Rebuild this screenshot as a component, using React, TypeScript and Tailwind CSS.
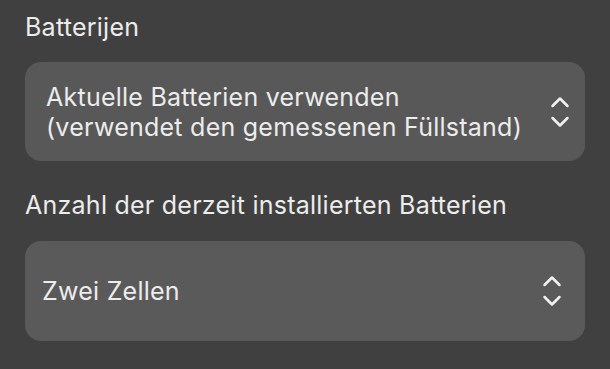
import React from 'react';

function UpDown() {
  return (
    <svg width="20" height="34" viewBox="0 0 20 34" fill="none" stroke="#f2f2f2" strokeWidth="2.5" strokeLinecap="round" strokeLinejoin="round">
      <polyline points="2.5,11 10,3.5 17.5,11" />
      <polyline points="2.5,23 10,30.5 17.5,23" />
    </svg>
  );
}

export default function App() {
  return (
    <div
      className="w-[610px] h-[369px] bg-[#404040] text-[#ececec] px-[25px] pt-[12px] flex flex-col text-[25px] leading-[30px] tracking-[0.25px]"
      style={{ fontFamily: 'Inter, "Noto Sans", sans-serif' }}
    >
      <div>Batterijen</div>

      <div className="mt-[20px] h-[99px] rounded-[16px] bg-[#585858] flex items-center justify-between pl-[21px] pr-[15px]">
        <div>
          Aktuelle Batterien verwenden
          <br />
          (verwendet den gemessenen Füllstand)
        </div>
        <UpDown />
      </div>

      <div className="mt-[29px]">Anzahl der derzeit installierten Batterien</div>

      <div className="mt-[21px] h-[100px] rounded-[16px] bg-[#5a5a5a] flex items-center justify-between pl-[17px] pr-[23px]">
        <div>Zwei Zellen</div>
        <UpDown />
      </div>
    </div>
  );
}
